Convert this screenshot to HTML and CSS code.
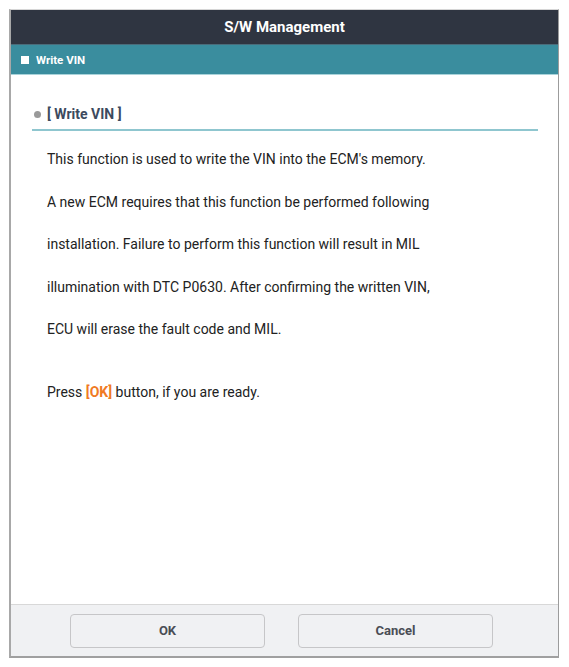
FILE: index.html
```html
<!DOCTYPE html>
<html lang="en">
<head>
    <meta charset="UTF-8">
    <meta name="viewport" content="width=device-width, initial-scale=1.0">
    <title>S/W Management</title>
    <link rel="stylesheet" href="styles.css">
</head>
<body>
    <!-- Dialog -->
    <div class="dialog">
        <div class="dialog-title">S/W Management</div>
        <div class="dialog-sub"><span class="sq"></span>Write VIN</div>

        <div class="dialog-body">
            <h3 class="section-title"><span class="dot"></span>[ Write VIN ]</h3>
            <p>This function is used to write the VIN into the ECM's memory.</p>
            <p>A new ECM requires that this function be performed following</p>
            <p>installation. Failure to perform this function will result in MIL</p>
            <p>illumination with DTC P0630. After confirming the written VIN,</p>
            <p>ECU will erase the fault code and MIL.</p>
            <p class="ready">Press <b class="hl">[OK]</b> button, if you are ready.</p>
        </div>

        <div class="dialog-footer">
            <button class="btn">OK</button>
            <button class="btn">Cancel</button>
        </div>
    </div>
</body>
</html>
```

FILE: styles.css
```css
/* Reset */
* {
    margin: 0;
    padding: 0;
    box-sizing: border-box;
}

body {
    font-family: Roboto, 'Liberation Sans', sans-serif;
    background: #fff;
    padding: 9px 10px 9px 9px;
}

/* Dialog */
.dialog {
    width: 550px;
    height: 649px;
    display: flex;
    flex-direction: column;
    border: 1px solid #9c9c9c;
    border-left: 2px solid #a8a8a8;
    border-top: 1px solid #d6d6d6;
    border-bottom: 2px solid #a0a0a0;
}

.dialog-title {
    height: 34px;
    background: #2f3541;
    color: #fff;
    font-size: 15px;
    font-weight: bold;
    display: flex;
    align-items: center;
    justify-content: center;
}

.dialog-sub {
    height: 31px;
    background: #3a8d9e;
    border-top: 1px solid #4a6c7a;
    border-bottom: 1px solid #a9d3da;
    color: #fff;
    font-size: 11.5px;
    font-weight: bold;
    display: flex;
    align-items: center;
    padding-left: 10px;
}

.sq {
    width: 8px;
    height: 8px;
    background: #fff;
    margin-right: 7px;
}

.dialog-body {
    flex: 1;
    padding: 31px 20px 0 21px;
}

.section-title {
    display: flex;
    align-items: center;
    font-size: 14px;
    font-weight: bold;
    color: #3c4a5e;
    padding: 0 0 7px 2px;
    border-bottom: 2px solid #8fc6cf;
    margin-bottom: 20px;
}

.dot {
    width: 7px;
    height: 7px;
    border-radius: 50%;
    background: #9a9a9a;
    margin-right: 6px;
}

.dialog-body p {
    font-size: 14px;
    color: #222;
    line-height: 17px;
    margin-bottom: 25.5px;
    padding-left: 15px;
}

.dialog-body p.ready {
    margin-top: 46px;
}

.hl {
    color: #f07a24;
}

/* Footer */
.dialog-footer {
    height: 52px;
    background: #f0f1f3;
    border-top: 1px solid #d8d8d8;
    display: flex;
    align-items: center;
    padding-left: 59px;
    gap: 33px;
}

.btn {
    width: 195px;
    height: 34px;
    background: #f0f1f3;
    border: 1px solid #c6c6c8;
    border-radius: 4px;
    font-family: Roboto, 'Liberation Sans', sans-serif;
    font-size: 13px;
    font-weight: bold;
    color: #4a4d55;
}
```
